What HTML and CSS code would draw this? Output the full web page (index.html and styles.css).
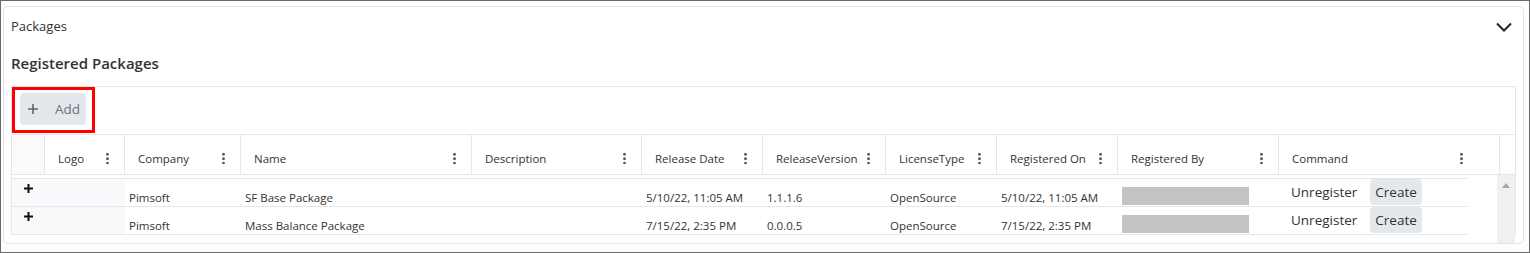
FILE: index.html
```html
<!DOCTYPE html>
<html lang="en">
<head>
<meta charset="utf-8">
<title>Packages</title>
<link rel="stylesheet" href="styles.css">
</head>
<body>
<div class="frame">
  <section class="card">
    <header class="card-head">
      <span class="card-title">Packages</span>
      <svg class="chevron" width="16" height="10" viewBox="0 0 16 10"><path d="M1 1.5 L8 8.5 L15 1.5" fill="none" stroke="#1c2533" stroke-width="2"/></svg>
    </header>
    <h2 class="section-title">Registered Packages</h2>

    <div class="grid">
      <div class="toolbar">
        <button class="add-btn" type="button">
          <svg width="10" height="10" viewBox="0 0 10 10"><path d="M5 0 V10 M0 5 H10" stroke="#5b6470" stroke-width="1.6"/></svg>
          <span>Add</span>
        </button>
        <div class="highlight"></div>
      </div>

      <div class="head-row">
        <div class="hcell hc-expand"></div>
        <div class="hcell"><span>Logo</span><i class="kebab"></i></div>
        <div class="hcell"><span>Company</span><i class="kebab"></i></div>
        <div class="hcell"><span>Name</span><i class="kebab"></i></div>
        <div class="hcell"><span>Description</span><i class="kebab"></i></div>
        <div class="hcell"><span>Release Date</span><i class="kebab"></i></div>
        <div class="hcell"><span>ReleaseVersion</span><i class="kebab"></i></div>
        <div class="hcell"><span>LicenseType</span><i class="kebab"></i></div>
        <div class="hcell"><span>Registered On</span><i class="kebab"></i></div>
        <div class="hcell"><span>Registered By</span><i class="kebab"></i></div>
        <div class="hcell hc-command"><span>Command</span><i class="kebab"></i></div>
        <div class="hcell hc-filler"></div>
      </div>

      <div class="body">
        <div class="rows">
          <div class="row">
            <div class="cell c-expand"><svg width="9" height="9" viewBox="0 0 9 9"><path d="M4.5 0 V9 M0 4.5 H9" stroke="#111" stroke-width="2"/></svg></div>
            <div class="cell c-pin"></div>
            <div class="cell">Pimsoft</div>
            <div class="cell">SF Base Package</div>
            <div class="cell"></div>
            <div class="cell">5/10/22, 11:05 AM</div>
            <div class="cell">1.1.1.6</div>
            <div class="cell">OpenSource</div>
            <div class="cell">5/10/22, 11:05 AM</div>
            <div class="cell"><span class="redacted"></span></div>
            <div class="cell c-command"><button class="link-btn" type="button">Unregister</button><button class="create-btn" type="button">Create</button></div>
          </div>
          <div class="row">
            <div class="cell c-expand"><svg width="9" height="9" viewBox="0 0 9 9"><path d="M4.5 0 V9 M0 4.5 H9" stroke="#111" stroke-width="2"/></svg></div>
            <div class="cell c-pin"></div>
            <div class="cell">Pimsoft</div>
            <div class="cell">Mass Balance Package</div>
            <div class="cell"></div>
            <div class="cell">7/15/22, 2:35 PM</div>
            <div class="cell">0.0.0.5</div>
            <div class="cell">OpenSource</div>
            <div class="cell">7/15/22, 2:35 PM</div>
            <div class="cell"><span class="redacted"></span></div>
            <div class="cell c-command"><button class="link-btn" type="button">Unregister</button><button class="create-btn" type="button">Create</button></div>
          </div>
        </div>
        <div class="body-filler"></div>
        <div class="vscroll"><svg width="8" height="5" viewBox="0 0 8 5"><path d="M0 5 L4 0 L8 5 Z" fill="#a6a6a6"/></svg></div>
      </div>
    </div>
  </section>
</div>
</body>
</html>
```

FILE: styles.css
```css
* { box-sizing: border-box; }

html, body {
  margin: 0;
  padding: 0;
  background: #ffffff;
}

body {
  font-family: "Open Sans", "Noto Sans", "Liberation Sans", sans-serif;
  color: #333;
}

.frame {
  width: 1530px;
  height: 253px;
  border: 1px solid #6a6a6a;
  padding: 5px 5px 0 2px;
  overflow: hidden;
  background: #fdfdfd;
}

.card {
  height: 238px;
  border: 1px solid #e4e4e4;
  border-radius: 5px;
  padding: 0 7px;
  background: #fff;
  overflow: hidden;
}

.card-head {
  height: 38px;
  display: flex;
  align-items: center;
  justify-content: space-between;
}

.card-title {
  font-size: 13px;
  color: #333;
}

.chevron {
  margin-right: 4px;
  margin-top: 1px;
}

.section-title {
  margin: 0;
  padding: 8px 0 13px;
  font-size: 15px;
  line-height: 20px;
  font-weight: 600;
  color: #333;
}

.grid {
  border-top: 1px solid #e3e7eb;
  border-right: 1px solid #e3e7eb;
}

.toolbar {
  position: relative;
  height: 48px;
  padding: 6px 8px 0;
  border-left: 1px solid #e3e7eb;
  border-bottom: 1px solid #e3e7eb;
}

.add-btn {
  height: 32px;
  display: flex;
  align-items: center;
  gap: 17px;
  padding: 0 6px 0 8px;
  border: none;
  border-radius: 4px;
  background: #e4e8ed;
  font-family: inherit;
  font-size: 13.5px;
  color: #6b737d;
}

.highlight {
  position: absolute;
  left: 0;
  top: 0;
  width: 83px;
  height: 46px;
  border: 3px solid #ff0000;
}

.head-row {
  display: grid;
  grid-template-columns: 33px 80px 116px 231px 170px 121px 123px 111px 121px 161px 221px 15px;
  height: 40px;
  border-left: 1px solid #e3e7eb;
  border-bottom: 1px solid #e3e7eb;
}

.hcell {
  display: flex;
  align-items: center;
  justify-content: space-between;
  padding: 7px 15px 0 13px;
  border-right: 1px solid #e3e7eb;
  font-size: 11.5px;
  color: #333;
  white-space: nowrap;
}

.hc-expand { background: #fbfbfc; }
.hc-command { padding-right: 36px; }
.hc-filler { border-right: none; }

.kebab {
  display: block;
  width: 3px;
  height: 12px;
  flex: none;
  background:
    radial-gradient(circle, #4d5764 1.2px, transparent 1.5px) 0 0 / 3px 4.5px repeat-y;
}

.body {
  display: flex;
  height: 60px;
  border-left: 1px solid #e3e7eb;
}

.rows {
  width: 1456px;
  margin-top: 3px;
  border-top: 1px solid #e3e7eb;
  background: linear-gradient(to right, #f8f9fa 0, #f8f9fa 113px, #fff 113px);
}

.row {
  display: grid;
  grid-template-columns: 33px 80px 116px 231px 170px 121px 123px 111px 121px 161px 189px;
  height: 28px;
  border-bottom: 1px solid #e3e7eb;
}

.cell {
  display: flex;
  align-items: flex-end;
  padding-left: 4px;
  font-size: 11.5px;
  line-height: 16px;
  color: #333;
  white-space: nowrap;
}

.c-expand {
  align-items: flex-start;
  padding: 5px 0 0 12px;
}

.redacted {
  display: block;
  width: 127px;
  height: 18px;
  margin-bottom: 1px;
  background: #c3c3c3;
}

.c-command {
  align-items: stretch;
  padding: 0 0 1px 0;
}

.link-btn {
  border: none;
  background: transparent;
  padding: 0 12px;
  font-family: inherit;
  font-size: 13.5px;
  color: #333;
}

.create-btn {
  margin-left: 1px;
  border: none;
  border-radius: 4px;
  background: #e4e8ed;
  padding: 0 5px;
  font-family: inherit;
  font-size: 13.5px;
  color: #333;
}

.body-filler {
  width: 29px;
}

.vscroll {
  width: 18px;
  height: 90px;
  flex: none;
  background: #f0f0f0;
  display: flex;
  justify-content: center;
  padding-top: 8px;
}
```
